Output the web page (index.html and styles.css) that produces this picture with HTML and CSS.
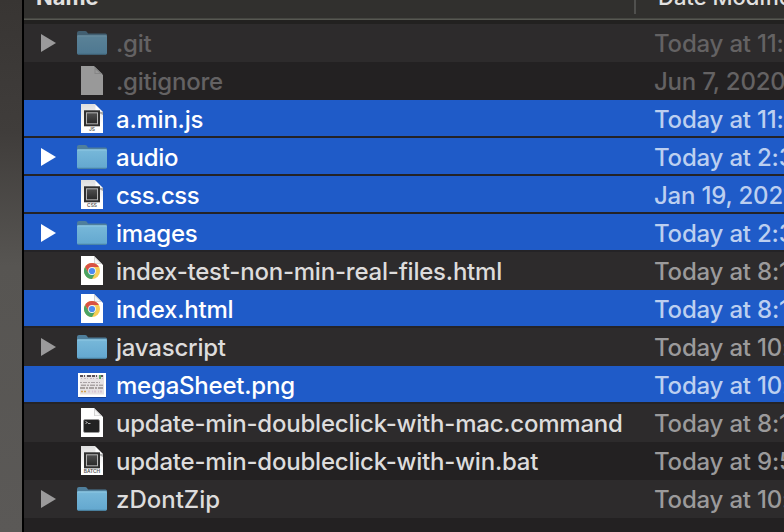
FILE: index.html
```
<!DOCTYPE html>
<html lang="en">
<head>
<meta charset="utf-8">
<title>Files</title>
<link rel="stylesheet" href="styles.css">
</head>
<body>
<svg class="defs" width="0" height="0" aria-hidden="true">
  <defs>
    <linearGradient id="fold" x2="0" y2="1"><stop offset="0" stop-color="#82bfdd"/><stop offset=".12" stop-color="#75b6d8"/><stop offset=".9" stop-color="#65a9d0"/><stop offset="1" stop-color="#5a9abf"/></linearGradient>
    <linearGradient id="paper" x2="0" y2="1"><stop offset="0" stop-color="#dedede"/><stop offset=".7" stop-color="#fff"/></linearGradient>
    <linearGradient id="chip" x2="0" y2="1"><stop offset="0" stop-color="#505050"/><stop offset="1" stop-color="#292929"/></linearGradient>
    <symbol id="folder" viewBox="0 0 32 32">
      <path d="M1 7q0-2 2-2h6q1.400 0 2 1l1 1.500H29.500q1.500 0 1.500 1.500v2H1z" fill="#4f7f9c"/>
      <path d="M1 10.500q0-1.200 1.200-1.200h27.600q1.200 0 1.200 1.200v16.800q0 1.400-1.400 1.400H2.400Q1 28.700 1 27.300z" fill="url(#fold)"/>
      <path d="M1.500 10h29" stroke="#94cae4" stroke-width=".7"/>
      <path d="M2 28.400h28" stroke="#49809f" stroke-width=".8"/>
    </symbol>
    <symbol id="page" viewBox="0 0 32 32">
      <path d="M5 2h13l9 9v20H5z" fill="#fff"/>
      <path d="M18 2v8h8z" fill="#d2d2d2"/>
      <path d="M19 4v5.200H24.200z" fill="#f6f6f6"/>
    </symbol>
    <symbol id="blank" viewBox="0 0 32 32">
      <path d="M5 2h13l9 9v20H5z" fill="#999"/>
      <path d="M18.500 2.500v7.500H26.500z" fill="#858585"/>
      <path d="M19.500 5.500v3.500H23.500z" fill="#999"/>
    </symbol>
    <symbol id="code" viewBox="0 0 32 32">
      <path d="M5 2h14l8 8v21H5z" fill="url(#paper)"/>
      <path d="M19.500 3v7H26.500z" fill="#fff"/>
      <path d="M20 9.500 27 10v3z" fill="#aaa"/>
      <rect x="8" y="8.300" width="16" height="16" fill="#303030"/>
      <rect x="10.500" y="10.800" width="11" height="11" fill="url(#chip)" stroke="#b4b4b4"/>
    </symbol>
    <symbol id="chrome" viewBox="0 0 32 32">
      <use href="#page" width="32" height="32"/>
      <circle cx="16" cy="17" r="8" fill="#f6ce55"/>
      <path d="M16 13h6.930A8 8 0 0 0 9.070 13L12.500 19z" fill="#d95144"/>
      <path d="M9.070 13A8 8 0 0 0 16 25l3.500-6L16 17l-3.500 2z" fill="#4aa364"/>
      <circle cx="16" cy="17" r="3.900" fill="#f5f5f5"/>
      <circle cx="16" cy="17" r="3.100" fill="#4d8cf0"/>
    </symbol>
    <symbol id="terminal" viewBox="0 0 32 32">
      <use href="#page" width="32" height="32"/>
      <rect x="7.500" y="13.500" width="16" height="13" rx="1.500" fill="#222" stroke="#999" stroke-width=".8"/>
      <path d="m9.500 15.500 2 1-2 1M12 17.500h2.500" fill="none" stroke="#ccc" stroke-width=".8"/>
    </symbol>
    <symbol id="sheet" viewBox="0 0 32 32">
      <rect x="2" y="6.500" width="28" height="23.500" fill="#112a60" opacity=".5"/>
      <rect x="2" y="5" width="28" height="24" fill="#fff"/>
      <rect x="4" y="7" width="24" height="19.500" fill="#e6e2e3"/>
      <path d="M4 8h24" stroke="#5b525a" stroke-width="2" stroke-dasharray="3 1 1 2 4 1"/>
      <path d="M5 10.500h22" stroke="#c5b6be" stroke-dasharray="1 2 2 1"/>
      <path d="M24 7v4" stroke="#62a866" stroke-width="2"/>
      <path d="M4 14.500h20" stroke="#aaa3a6" stroke-dasharray="2 1 4 1"/>
      <path d="M5 17.200h22" stroke="#8e8789" stroke-dasharray="5 1 2 1"/>
      <path d="M4 20h24" stroke="#69605f" stroke-width="1.200" stroke-dasharray="5 1 2 1"/>
      <path d="M5 23.500h5" stroke="#d6a24f" stroke-width="1.500" stroke-dasharray="2 1"/>
      <path d="M12 23.500h14" stroke="#d9c5d2" stroke-width="2" stroke-dasharray="2 2 1 1"/>
    </symbol>
    <symbol id="arrow" viewBox="0 0 16 18"><path d="M1 0 16 9 1 18z" fill="currentColor"/></symbol>
  </defs>
</svg>
<div class="screen">
  <div class="backdrop"></div>
  <main class="finder">
    <header class="head"><span class="head-name">Name</span><span class="head-date">Date Modified</span></header>
    <div class="row hid"><svg class="arrow"><use href="#arrow"/></svg><svg class="icon dim"><use href="#folder"/></svg><span class="name">.git</span><span class="date">Today at 11:42 AM</span></div>
    <div class="row odd hid"><i class="arrow"></i><svg class="icon"><use href="#blank"/></svg><span class="name">.gitignore</span><span class="date">Jun 7, 2020 at 9:10 AM</span></div>
    <div class="row sel"><i class="arrow"></i><svg class="icon" viewBox="0 0 32 32"><use href="#code"/><text x="16" y="29.300" class="ext">JS</text></svg><span class="name">a.min.js</span><span class="date">Today at 11:42 AM</span></div>
    <div class="row sel"><svg class="arrow"><use href="#arrow"/></svg><svg class="icon"><use href="#folder"/></svg><span class="name">audio</span><span class="date">Today at 2:30 AM</span></div>
    <div class="row sel"><i class="arrow"></i><svg class="icon" viewBox="0 0 32 32"><use href="#code"/><text x="16" y="29.300" class="ext">CSS</text></svg><span class="name tight">css.css</span><span class="date">Jan 19, 2021 at 9:10 AM</span></div>
    <div class="row sel"><svg class="arrow"><use href="#arrow"/></svg><svg class="icon"><use href="#folder"/></svg><span class="name">images</span><span class="date">Today at 2:30 AM</span></div>
    <div class="row"><i class="arrow"></i><svg class="icon"><use href="#chrome"/></svg><span class="name">index-test-non-min-real-files.html</span><span class="date">Today at 8:15 AM</span></div>
    <div class="row sel"><i class="arrow"></i><svg class="icon"><use href="#chrome"/></svg><span class="name">index.html</span><span class="date">Today at 8:15 AM</span></div>
    <div class="row"><svg class="arrow"><use href="#arrow"/></svg><svg class="icon"><use href="#folder"/></svg><span class="name">javascript</span><span class="date">Today at 10:20 AM</span></div>
    <div class="row sel"><i class="arrow"></i><svg class="icon"><use href="#sheet"/></svg><span class="name">megaSheet.png</span><span class="date">Today at 10:20 AM</span></div>
    <div class="row"><i class="arrow"></i><svg class="icon"><use href="#terminal"/></svg><span class="name">update-min-doubleclick-with-mac.command</span><span class="date">Today at 8:15 AM</span></div>
    <div class="row odd"><i class="arrow"></i><svg class="icon" viewBox="0 0 32 32"><use href="#code"/><text x="16" y="29.300" class="ext">BATCH</text></svg><span class="name">update-min-doubleclick-with-win.bat</span><span class="date">Today at 9:52 AM</span></div>
    <div class="row"><svg class="arrow"><use href="#arrow"/></svg><svg class="icon"><use href="#folder"/></svg><span class="name wide">zDontZip</span><span class="date">Today at 10:20 AM</span></div>
  </main>
</div>
</body>
</html>
```
FILE: styles.css
```
* { box-sizing: border-box; }
body { margin: 0; background: #232122; font-family: Inter, "Liberation Sans", sans-serif; overflow: hidden; }
.defs { display: block; }
.screen { display: grid; grid-template-columns: 24px 760px; width: 784px; height: 532px; overflow: hidden; }
.backdrop { border-right: 2px solid #000; background: linear-gradient(#383533 0, #403d3b 25%, #575552 50%, #5b5957 100%); }
.finder { height: 532px; overflow: hidden; background: #232122; }
.head { display: grid; grid-template-columns: 612px 1fr; height: 24px; background: linear-gradient(#31302e 0 18px, #454641 18px 19px, #575852 19px 20px, #222120 20px); font-size: 22px; line-height: 26px; white-space: nowrap; color: #e2e1e0; }
.head span { height: 18px; margin-top: -16px; }
.head-name { padding-left: 12px; font-weight: 700; }
.head-date { padding-left: 22px; font-weight: 500; }
.head .head-name { background: linear-gradient(#50504e, #50504e) right top / 2px 30px no-repeat; height: 30px; }
.row { display: grid; grid-template-columns: 16px 20px 32px 8px 538px 1fr; height: 38px; padding-left: 16px; align-items: start; background: #2d2b2c; color: #dddcdc; font-size: 24px; line-height: 36px; white-space: nowrap; }
.odd { background: #232122; }
.sel { background: #1f5bc8; color: #fff; border-bottom: 2px solid #242326; }
.arrow { display: block; grid-column: 1; width: 16px; height: 18px; margin-top: 10px; color: #9b9a9b; }
.sel .arrow { color: #fff; }
.icon { display: block; grid-column: 3; width: 32px; height: 32px; margin-top: 2px; }
.dim { opacity: .62; }
.ext { font: 600 4.800px Inter, sans-serif; text-anchor: middle; fill: #555; }
.name { grid-column: 5; font-weight: 500; margin-top: 2px; letter-spacing: -.22px; }
.tight { letter-spacing: -.5px; }
.wide { letter-spacing: 0; }
.date { grid-column: 6; margin-top: 2px; font-weight: 450; color: #9b9a9b; letter-spacing: -.2px; }
.sel .date { color: #bccff0; }
.hid .name, .hid .date { color: #646263; }
```
